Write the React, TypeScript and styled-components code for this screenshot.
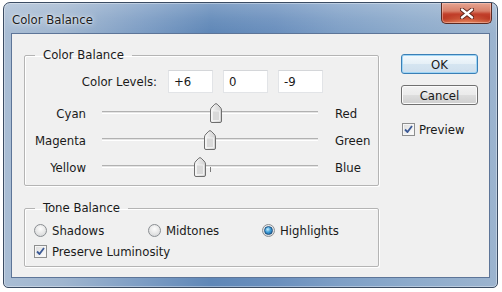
import React from "react";
import styled, { createGlobalStyle } from "styled-components";

const Global = createGlobalStyle`
  html, body { margin: 0; padding: 0; background: #ffffff; }
  body { width: 502px; height: 292px; overflow: hidden; font-family: "DejaVu Sans Condensed", "Liberation Sans", sans-serif; }
  * { box-sizing: border-box; }
`;

const Window = styled.div`
  margin: 2px 0 0 3px;
  width: 495px;
  height: 286px;
  border: 1px solid #3b4c63;
  border-radius: 7px 7px 5px 5px;
  display: flex;
  flex-direction: column;
  padding: 0 7px 9px 7px;
  background:
    linear-gradient(180deg, rgba(255,255,255,0.22) 0px, rgba(255,255,255,0.08) 16px, rgba(255,255,255,0) 30px),
    linear-gradient(90deg, #a9bdd4 0%, #9fb5cf 12%, #7d9dc4 28%, #5f87b7 42%, #6a8fbd 55%, #7e9fc6 68%, #8caacb 82%, #9cb4cf 100%);
  box-shadow: inset 0 0 0 1px rgba(255,255,255,0.35);
`;

const TitleBar = styled.div`
  height: 30px;
  display: flex;
  align-items: flex-start;
  justify-content: space-between;
  margin-right: -2px;
`;

const Title = styled.div`
  font-family: "DejaVu Sans Condensed", "Liberation Sans", sans-serif;
  font-size: 13px;
  color: #1b1b1b;
  line-height: 16px;
  margin: 9px 0 0 1px;
  text-shadow: 0 0 6px rgba(255,255,255,0.9), 0 0 2px rgba(255,255,255,0.8);
`;

const CloseButton = styled.div`
  width: 51px;
  height: 21px;
  border: 1px solid #5b2a22;
  border-top: none;
  border-radius: 0 0 5px 5px;
  display: flex;
  align-items: center;
  justify-content: center;
  background:
    radial-gradient(ellipse 60% 45% at 50% 100%, rgba(255,170,120,0.55), rgba(255,170,120,0) 100%),
    linear-gradient(180deg, #e6a592 0%, #d8806a 40%, #c2402b 55%, #b83420 80%, #c85a3c 100%);
  box-shadow: inset 0 0 0 1px rgba(255,210,200,0.45);
`;

const Client = styled.div`
  flex: 1;
  background: #f0f0f0;
  border: 1px solid #5d7598;
  display: flex;
  padding: 13px 0 0 12px;
  gap: 22px;
  color: #1a1a1a;
  font-size: 13px;
`;

const LeftColumn = styled.div`
  width: 355px;
  display: flex;
  flex-direction: column;
  gap: 14px;
`;

const Group = styled.fieldset`
  margin: 0;
  padding: 0 0 4px 0;
  border: 1px solid #b4b4b4;
  border-radius: 2px;
  box-shadow: inset 1px 1px 0 #ffffff, 1px 1px 0 #ffffff;
  min-width: 0;
`;

const Legend = styled.legend`
  margin-left: 10px;
  padding: 0 8px;
  line-height: 16px;
  font-size: 13px;
`;

const LevelsRow = styled.div`
  display: flex;
  align-items: center;
  height: 23px;
  margin-top: 7px;
  gap: 10px;
`;

const LevelsLabel = styled.div`
  width: 132px;
  text-align: right;
  margin-right: 1px;
`;

const NumberBox = styled.div`
  width: 45px;
  height: 23px;
  background: #ffffff;
  border: 1px solid #e2e4e7;
  border-top-color: #d4d6d9;
  display: flex;
  align-items: center;
  padding-left: 5px;
`;

const SliderGrid = styled.div`
  display: grid;
  grid-template-columns: 61px 216px auto;
  column-gap: 16px;
  grid-auto-rows: 27px;
  align-items: center;
  margin-top: 7px;
`;

const LeftLabel = styled.div`
  text-align: right;
`;

const RightLabel = styled.div`
  padding-left: 1px;
`;

const Track = styled.div`
  position: relative;
  height: 27px;
  display: flex;
  align-items: center;
`;

const TrackLine = styled.div`
  width: 100%;
  height: 3px;
  margin-top: -2px;
  border-top: 1px solid #b1b1b1;
  border-bottom: 1px solid #ffffff;
  background: #e4e4e4;
`;

const Tick = styled.div`
  position: absolute;
  left: 108px;
  top: 13px;
  width: 1px;
  height: 5px;
  background: #7a7a7a;
`;

const ThumbWrap = styled.div`
  position: absolute;
  top: 3px;
  width: 12px;
  height: 20px;
  margin-left: -6px;
`;

const ToneRows = styled.div`
  padding: 4px 0 0 9px;
  display: grid;
  grid-template-columns: 114px 114px auto;
  grid-auto-rows: 21px;
  align-items: center;
`;

const Option = styled.label<{ $span?: number }>`
  display: flex;
  align-items: center;
  gap: 5px;
  grid-column: span ${(p) => p.$span ?? 1};
`;

const Radio = styled.span<{ $on?: boolean }>`
  width: 13px;
  height: 13px;
  border-radius: 50%;
  border: 1px solid #8a8e92;
  background: radial-gradient(circle at 50% 35%, #fdfdfd 0%, #eaeaea 45%, #cfd1d3 100%);
  display: flex;
  align-items: center;
  justify-content: center;
  &::after {
    content: "";
    display: ${(p) => (p.$on ? "block" : "none")};
    width: 7px;
    height: 7px;
    border-radius: 50%;
    border: 1px solid #1b4f80;
    background: radial-gradient(circle at 40% 35%, #c8f0ff 0%, #3f9ed8 45%, #145a95 100%);
  }
`;

const Box = styled.span`
  width: 13px;
  height: 13px;
  border: 1px solid #8e8f8f;
  background: linear-gradient(135deg, #dcdcdc 0%, #f4f4f4 70%, #ffffff 100%);
  box-shadow: inset 0 0 0 1px #f6f6f6;
  display: flex;
  align-items: center;
  justify-content: center;
`;

const RightColumn = styled.div`
  width: 77px;
  padding-top: 7px;
  display: flex;
  flex-direction: column;
`;

const Button = styled.div<{ $default?: boolean }>`
  height: 20px;
  border: 1px solid ${(p) => (p.$default ? "#3a7fb6" : "#707070")};
  border-radius: 3px;
  display: flex;
  align-items: center;
  justify-content: center;
  font-size: 13px;
  background: ${(p) =>
    p.$default
      ? "linear-gradient(180deg, #f3f9fd 0%, #e6f0f7 48%, #d5e5f1 52%, #cfdfed 100%)"
      : "linear-gradient(180deg, #f2f2f2 0%, #ebebeb 48%, #dddddd 52%, #cfcfcf 100%)"};
  box-shadow: ${(p) => (p.$default ? "inset 0 0 0 1px #9fd5f5" : "inset 0 0 0 1px #fbfbfb")};
  & + & {
    margin-top: 11px;
  }
`;

const PreviewRow = styled.label`
  display: flex;
  align-items: center;
  gap: 4px;
  margin-top: 17px;
  margin-left: 1px;
`;

const CheckMark = () => (
  <svg width="9" height="9" viewBox="0 0 9 9">
    <path d="M1 4.5 L3.5 7 L8 1" fill="none" stroke="#3c5a96" strokeWidth="1.8" strokeLinejoin="round" />
  </svg>
);

const Thumb = () => (
  <svg width="12" height="20" viewBox="0 0 12 20">
    <defs>
      <linearGradient id="tg" x1="0" y1="0" x2="1" y2="0">
        <stop offset="0" stopColor="#fbfbfb" />
        <stop offset="0.5" stopColor="#e2e2e2" />
        <stop offset="1" stopColor="#d2d2d2" />
      </linearGradient>
    </defs>
    <path
      d="M2 19.5 Q0.5 19.5 0.5 18 V7 Q0.5 5.5 2 4 L4.8 1.2 Q6 0 7.2 1.2 L10 4 Q11.5 5.5 11.5 7 V18 Q11.5 19.5 10 19.5 Z"
      fill="url(#tg)"
      stroke="#6e6e6e"
      strokeWidth="1"
    />
    <rect x="2.5" y="8" width="7" height="9.5" fill="#d9d9d9" stroke="#f4f4f4" strokeWidth="0.8" />
  </svg>
);

const CloseGlyph = () => (
  <svg width="14" height="11" viewBox="0 0 14 11">
    <path d="M2 1.5 L12 9.5 M12 1.5 L2 9.5" stroke="#5a2219" strokeWidth="4.2" strokeLinecap="round" />
    <path d="M2 1.5 L12 9.5 M12 1.5 L2 9.5" stroke="#ffffff" strokeWidth="2.4" strokeLinecap="round" />
  </svg>
);

const sliders = [
  { left: "Cyan", right: "Red", value: 6 },
  { left: "Magenta", right: "Green", value: 0 },
  { left: "Yellow", right: "Blue", value: -9 },
];

export default function App() {
  return (
    <>
      <Global />
      <Window>
        <TitleBar>
          <Title>Color Balance</Title>
          <CloseButton>
            <CloseGlyph />
          </CloseButton>
        </TitleBar>
        <Client>
          <LeftColumn>
            <Group>
              <Legend>Color Balance</Legend>
              <LevelsRow>
                <LevelsLabel>Color Levels:</LevelsLabel>
                <NumberBox>+6</NumberBox>
                <NumberBox>0</NumberBox>
                <NumberBox>-9</NumberBox>
              </LevelsRow>
              <SliderGrid>
                {sliders.map((s) => (
                  <React.Fragment key={s.left}>
                    <LeftLabel>{s.left}</LeftLabel>
                    <Track>
                      <TrackLine />
                      <Tick />
                      <ThumbWrap style={{ left: `${108 + (s.value / 100) * 108}px` }}>
                        <Thumb />
                      </ThumbWrap>
                    </Track>
                    <RightLabel>{s.right}</RightLabel>
                  </React.Fragment>
                ))}
              </SliderGrid>
            </Group>
            <Group>
              <Legend>Tone Balance</Legend>
              <ToneRows>
                <Option>
                  <Radio />
                  Shadows
                </Option>
                <Option>
                  <Radio />
                  Midtones
                </Option>
                <Option>
                  <Radio $on />
                  Highlights
                </Option>
                <Option $span={3}>
                  <Box>
                    <CheckMark />
                  </Box>
                  Preserve Luminosity
                </Option>
              </ToneRows>
            </Group>
          </LeftColumn>
          <RightColumn>
            <Button $default>OK</Button>
            <Button>Cancel</Button>
            <PreviewRow>
              <Box>
                <CheckMark />
              </Box>
              Preview
            </PreviewRow>
          </RightColumn>
        </Client>
      </Window>
    </>
  );
}
